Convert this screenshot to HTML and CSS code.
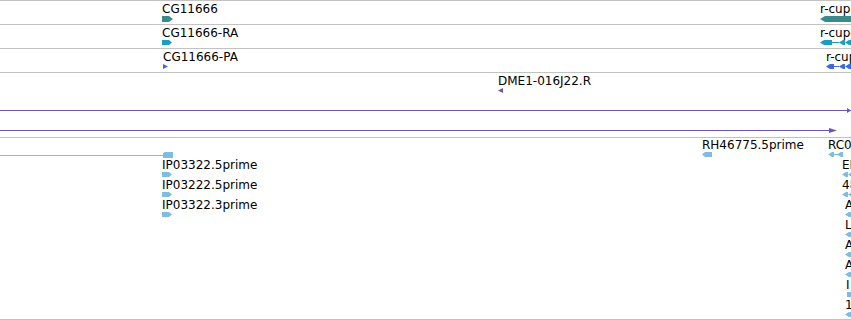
FILE: index.html
```html
<!DOCTYPE html>
<html lang="en">
<head>
  <meta charset="UTF-8" />
  <title>Genome view</title>
  <link rel="stylesheet" href="styles.css">
</head>
<body>

  <div class="view">

    <!-- gene track -->
    <div class="track single">
      <div class="feat" style="left:162px;top:1px">
        <span class="label">CG11666</span>
        <svg class="glyph gene" width="11" height="6"><polygon points="0,0 7,0 11,3 7,6 0,6"/></svg>
      </div>
      <div class="feat" style="left:820px;top:1px">
        <span class="label">r-cup</span>
        <svg class="glyph gene" width="40" height="6"><polygon points="0,3 5,0 40,0 40,6 5,6"/></svg>
      </div>
    </div>

    <!-- transcripts -->
    <div class="track single">
      <div class="feat" style="left:162px;top:1px">
        <span class="label">CG11666-RA</span>
        <svg class="glyph rna" width="10" height="5"><polygon points="0,0 7,0 10,2.5 7,5 0,5"/></svg>
      </div>
      <div class="feat" style="left:820px;top:1px">
        <span class="label">r-cup-RA</span>
        <svg class="glyph rna" width="31" height="5">
          <polygon points="0,2.5 4,0 12,0 12,5 4,5"/>
          <rect x="12" y="2" width="7" height="1"/>
          <polygon points="19,2.5 23,0 25,0 25,5 23,5"/>
          <polygon points="25,2.5 29,0 31,0 31,5 29,5"/>
        </svg>
      </div>
    </div>

    <!-- proteins -->
    <div class="track single">
      <div class="feat" style="left:163px;top:1px">
        <span class="label">CG11666-PA</span>
        <svg class="glyph prot" width="5" height="5"><polygon points="0,0 5,2.5 0,5"/></svg>
      </div>
      <div class="feat" style="left:826px;top:1px">
        <span class="label">r-cup-PA</span>
        <svg class="glyph prot" width="26" height="5">
          <polygon points="0,2.5 4,0 8,0 8,5 4,5"/>
          <rect x="8" y="2" width="5" height="1"/>
          <polygon points="13,2.5 17,0 19,0 19,5 17,5"/>
          <polygon points="19,2.5 23,0 26,0 26,5 23,5"/>
        </svg>
      </div>
    </div>

    <!-- clones -->
    <div class="track clones">
      <div class="feat" style="left:498px;top:1px">
        <span class="label">DME1-016J22.R</span>
        <svg class="glyph clone" width="5" height="5"><polygon points="5,0 0,2.5 5,5"/></svg>
      </div>
      <div class="feat" style="left:0;top:21px">
        <span class="label"></span>
        <svg class="glyph clone" width="851" height="5">
          <rect x="0" y="2" width="851" height="1"/>
          <polygon points="847,0 851,2.5 847,5"/>
        </svg>
      </div>
      <div class="feat" style="left:0;top:41px">
        <span class="label"></span>
        <svg class="glyph clone" width="838" height="5">
          <rect x="0" y="2" width="830" height="1"/>
          <polygon points="829,0 837,2.5 829,5"/>
        </svg>
      </div>
    </div>

    <!-- ESTs -->
    <div class="track ests">
      <div class="feat" style="left:0;top:0">
        <span class="label"></span>
        <svg class="glyph est" width="173" height="6">
          <rect x="0" y="3" width="164" height="1"/>
          <polygon points="163,1 165,0 173,0 173,6 163,6"/>
        </svg>
      </div>
      <div class="feat" style="left:702px;top:0">
        <span class="label">RH46775.5prime</span>
        <svg class="glyph est" width="10" height="5"><polygon points="0,2.5 3,0 10,0 10,5 3,5"/></svg>
      </div>
      <div class="feat" style="left:828px;top:0">
        <span class="label">RC02268.5prime</span>
        <svg class="glyph est" width="15" height="5">
          <polygon points="0,2.5 4,0 6,0 6,5 4,5"/>
          <rect x="6" y="2" width="4" height="1"/>
          <polygon points="9,2.5 13,0 15,0 15,5 13,5"/>
        </svg>
      </div>
      <div class="feat" style="left:162px;top:20px">
        <span class="label">IP03322.5prime</span>
        <svg class="glyph est" width="10" height="5"><polygon points="0,0 7,0 10,2.5 7,5 0,5"/></svg>
      </div>
      <div class="feat" style="left:842px;top:20px">
        <span class="label">EP09751.5prime</span>
        <svg class="glyph est" width="12" height="5">
          <polygon points="0,2.5 4,0 6,0 6,5 4,5"/>
          <polygon points="6,2.5 10,0 12,0 12,5 10,5"/>
        </svg>
      </div>
      <div class="feat" style="left:162px;top:40px">
        <span class="label">IP03222.5prime</span>
        <svg class="glyph est" width="10" height="5"><polygon points="0,0 7,0 10,2.5 7,5 0,5"/></svg>
      </div>
      <div class="feat" style="left:842px;top:40px">
        <span class="label">48C10.3prime</span>
        <svg class="glyph est" width="12" height="5">
          <polygon points="0,2.5 4,0 6,0 6,5 4,5"/>
          <polygon points="6,2.5 10,0 12,0 12,5 10,5"/>
        </svg>
      </div>
      <div class="feat" style="left:162px;top:60px">
        <span class="label">IP03322.3prime</span>
        <svg class="glyph est" width="10" height="5"><polygon points="0,0 7,0 10,2.5 7,5 0,5"/></svg>
      </div>
      <div class="feat" style="left:845px;top:60px">
        <span class="label">AT08843.5prime</span>
        <svg class="glyph est" width="8" height="5"><polygon points="0,2.5 4,0 8,0 8,5 4,5"/></svg>
      </div>
      <div class="feat" style="left:845px;top:80px">
        <span class="label">LD33102.5prime</span>
        <svg class="glyph est" width="8" height="5"><polygon points="0,2.5 4,0 8,0 8,5 4,5"/></svg>
      </div>
      <div class="feat" style="left:845px;top:100px">
        <span class="label">AT19475.5prime</span>
        <svg class="glyph est" width="8" height="5"><polygon points="0,2.5 4,0 8,0 8,5 4,5"/></svg>
      </div>
      <div class="feat" style="left:845px;top:120px">
        <span class="label">AT22910.5prime</span>
        <svg class="glyph est" width="8" height="5"><polygon points="0,2.5 4,0 8,0 8,5 4,5"/></svg>
      </div>
      <div class="feat" style="left:846px;top:140px">
        <span class="label">I</span>
        <svg class="glyph est" width="8" height="5"><rect x="1" y="0" width="6" height="5"/></svg>
      </div>
      <div class="feat" style="left:845px;top:160px">
        <span class="label">1</span>
        <svg class="glyph est" width="8" height="5"><polygon points="0,2.5 4,0 8,0 8,5 4,5"/></svg>
      </div>
    </div>

  </div>

</body>
</html>
```

FILE: styles.css
```css
body {
  margin: 0;
  background: #fff;
  font-family: "DejaVu Sans", sans-serif;
  font-size: 12px;
  color: #000;
}

.view {
  width: 851px;
  height: 320px;
  overflow: hidden;
  border-top: 1px solid #c2c2c2;
}

.track {
  position: relative;
  overflow: hidden;
  border-bottom: 1px solid #c2c2c2;
}
.track.single { height: 23px; }
.track.clones { height: 64px; }
.track.ests { height: 181px; }

/* one feature: label on top, glyph below */
.feat {
  position: absolute;
  white-space: nowrap;
}
.label {
  display: block;
  height: 14px;
  line-height: 14px;
}
.glyph {
  display: block;
}

.gene { fill: #3b8a8c; }
.rna { fill: #1c9ec0; }
.prot { fill: #3a6bd6; }
.clone { fill: #6a58a6; }
.est { fill: #80bbe0; }
```
